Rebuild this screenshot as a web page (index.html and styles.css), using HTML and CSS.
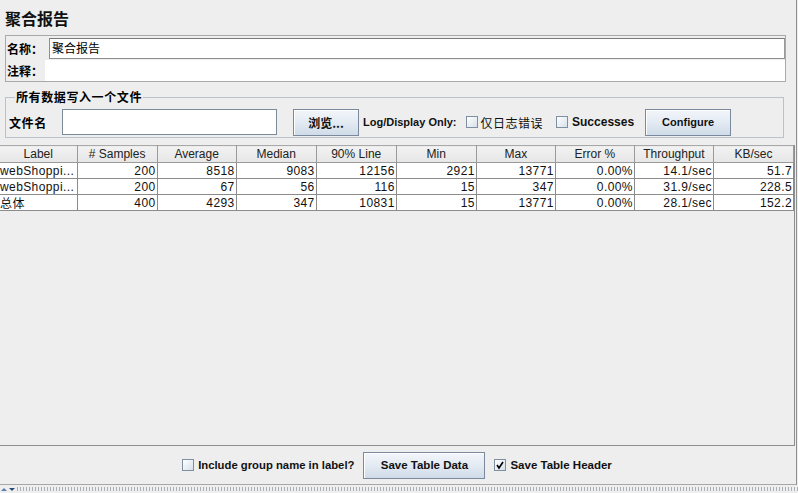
FILE: index.html
```html
<!DOCTYPE html>
<html lang="zh">
<head>
<meta charset="utf-8">
<title>聚合报告</title>
<link rel="stylesheet" href="styles.css">
</head>
<body>
<div class="app">
  <div class="main">
    <div class="title">聚合报告</div>
    <div class="namepanel">
      <div class="nrow">
        <span class="nlabel n1">名称：</span>
        <div class="nfield">聚合报告</div>
      </div>
      <div class="nrow">
        <span class="nlabel n2">注释：</span>
        <div class="cfield"></div>
      </div>
    </div>
    <fieldset class="filebox">
      <legend>所有数据写入一个文件</legend>
      <div class="filerow">
        <span class="flabel">文件名</span>
        <div class="ffield"></div>
        <button class="btn browse">浏览...</button>
        <span class="blabel logonly">Log/Display Only:</span>
        <span class="cb cb1"></span><span class="clabel">仅日志错误</span>
        <span class="cb cb2"></span><span class="blabel succ">Successes</span>
        <button class="btn configure">Configure</button>
      </div>
    </fieldset>
    <div class="tablepane">
      <table class="grid">
        <colgroup>
          <col class="c1"><col class="c2"><col class="c3"><col class="c4"><col class="c5">
          <col class="c6"><col class="c7"><col class="c8"><col class="c9"><col class="c10">
        </colgroup>
        <thead>
          <tr><th>Label</th><th># Samples</th><th>Average</th><th>Median</th><th>90% Line</th><th>Min</th><th>Max</th><th>Error %</th><th>Throughput</th><th>KB/sec</th></tr>
        </thead>
        <tbody>
          <tr><td class="lbl">webShoppi...</td><td>200</td><td>8518</td><td>9083</td><td>12156</td><td>2921</td><td>13771</td><td>0.00%</td><td>14.1/sec</td><td>51.7</td></tr>
          <tr><td class="lbl">webShoppi...</td><td>200</td><td>67</td><td>56</td><td>116</td><td>15</td><td>347</td><td>0.00%</td><td>31.9/sec</td><td>228.5</td></tr>
          <tr><td class="lbl cjk">总体</td><td>400</td><td>4293</td><td>347</td><td>10831</td><td>15</td><td>13771</td><td>0.00%</td><td>28.1/sec</td><td>152.2</td></tr>
        </tbody>
      </table>
    </div>
    <div class="bottombar">
      <span class="cb"></span><span class="blabel incl">Include group name in label?</span>
      <button class="btn savedata">Save Table Data</button>
      <span class="cb checked"><svg width="10" height="10" viewBox="0 0 10 10"><path d="M2 5 L4 8 L8 2" fill="none" stroke="#000" stroke-width="1.6"/></svg></span><span class="blabel">Save Table Header</span>
    </div>
  </div>
  <div class="splitter">
    <svg class="arrows" width="16" height="8" viewBox="0 0 16 8"><path d="M1 6 L4 3 L7 6 Z" fill="#5a7fb0"/><path d="M9 3 L15 3 L12 6 Z" fill="#2c4a78"/></svg>
    <div class="dots"></div>
  </div>
</div>
</body>
</html>
```

FILE: styles.css
```css
html, body {
  margin: 0;
  padding: 0;
}
body {
  width: 798px;
  height: 493px;
  overflow: hidden;
  background: #eeeeee;
  color: #000;
  font-family: "Liberation Sans", "Noto Sans CJK SC", sans-serif;
  font-size: 12px;
}
.app {
  display: flex;
  flex-direction: column;
  height: 493px;
}
.main {
  width: 797px;
  height: 485px;
  box-sizing: border-box;
  border-right: 1px solid #8e8e8e;
  border-bottom: 1px solid #a8a8a8;
  display: flex;
  flex-direction: column;
}
.title {
  height: 35px;
  box-sizing: border-box;
  padding: 9px 0 0 5px;
  font-family: "Noto Sans CJK SC", sans-serif;
  font-size: 16px;
  line-height: 18px;
  font-weight: 700;
  color: #111;
}
.namepanel {
  margin-left: 5px;
  width: 781px;
  height: 47px;
  box-sizing: border-box;
  border: 1px solid #a9a9a9;
  padding: 2px 0 0 1px;
  display: flex;
  flex-direction: column;
  gap: 1px;
}
.nrow {
  display: flex;
  align-items: center;
  height: 21px;
}
.nlabel {
  font-family: "Noto Sans CJK SC", sans-serif;
  font-weight: 700;
  font-size: 12px;
  line-height: 14px;
  box-sizing: border-box;
}
.n1 { width: 42px; }
.n2 { width: 38px; }
.nfield {
  width: 736px;
  height: 21px;
  box-sizing: border-box;
  background: #fff;
  border: 1px solid #8f8f8f;
  border-top-color: #7a7a7a;
  border-right-color: #9a9a9a;
  font-family: "Noto Sans CJK SC", sans-serif;
  font-size: 12px;
  line-height: 18px;
  padding-left: 2px;
}
.cfield {
  flex: 1;
  height: 21px;
  background: #fff;
}
.filebox {
  margin: 7px 0 0 5px;
  width: 779px;
  box-sizing: border-box;
  border: 1px solid #b8c3cd;
  padding: 0 0 1px 3px;
  min-width: 0;
}
.filebox legend {
  margin-left: 6px;
  padding: 0 1px;
  font-family: "Noto Sans CJK SC", sans-serif;
  font-weight: 700;
  font-size: 12px;
  line-height: 16px;
  letter-spacing: 0.6px;
}
.filerow {
  display: flex;
  align-items: center;
  height: 28px;
  margin-top: 3px;
}
.flabel {
  font-family: "Noto Sans CJK SC", sans-serif;
  font-weight: 700;
  font-size: 12px;
  letter-spacing: 0.6px;
  width: 53px;
}
.ffield {
  width: 215px;
  height: 26px;
  box-sizing: border-box;
  background: #fff;
  border: 1px solid #7d8a99;
  margin-bottom: 1px;
}
.btn {
  height: 27px;
  box-sizing: border-box;
  border: 1px solid #7a8a9c;
  border-radius: 0;
  background: linear-gradient(#f3f6fa, #e1e9f2 55%, #cfdbe8);
  box-shadow: inset 1px 1px 0 #ffffff;
  font-family: "Liberation Sans", "Noto Sans CJK SC", sans-serif;
  font-weight: 700;
  font-size: 11px;
  color: #111;
  padding: 0;
  margin: 0;
}
.browse {
  margin-left: 16px;
  width: 66px;
  font-family: "Noto Sans CJK SC", sans-serif;
  font-size: 12px;
}
.blabel {
  font-weight: 700;
  font-size: 11.5px;
  color: #111;
  white-space: nowrap;
}
.logonly {
  margin-left: 4px;
  font-size: 11px;
}
.succ { font-size: 12px; }
.clabel {
  font-family: "Noto Sans CJK SC", sans-serif;
  font-size: 12px;
  letter-spacing: 0.5px;
  margin-left: 3px;
  color: #111;
}
.cb {
  width: 12px;
  height: 12px;
  box-sizing: border-box;
  border: 1px solid #7e8fa2;
  background: linear-gradient(135deg, #ffffff, #d6e0ea);
  display: inline-flex;
  align-items: center;
  justify-content: center;
  flex: none;
}
.cb1 { margin-left: 9px; }
.cb2 { margin-left: 13px; margin-right: 4px; }
.configure {
  margin-left: 11px;
  width: 86px;
}
.tablepane {
  margin-top: 7px;
  width: 795px;
  height: 301px;
  box-sizing: border-box;
  border-right: 1px solid #8e8e8e;
  border-bottom: 1px solid #8e8e8e;
  overflow: hidden;
}
.grid {
  table-layout: fixed;
  border-collapse: collapse;
  width: 794px;
}
.c1 { width: 77px; }
.c2 { width: 80px; }
.c3 { width: 79px; }
.c4 { width: 80px; }
.c5 { width: 80px; }
.c6 { width: 80px; }
.c7 { width: 79px; }
.c8 { width: 79px; }
.c9 { width: 79px; }
.c10 { width: 80px; }
.grid th {
  height: 16px;
  padding: 0;
  font-weight: 400;
  font-size: 12px;
  color: #222;
  text-align: center;
  background: linear-gradient(#f2f2f2, #e6e6e6);
  border-top: 1px solid #a8a8a8;
  border-bottom: 1px solid #9a9a9a;
  border-right: 1px solid #9a9a9a;
  border-left: 1px solid #9a9a9a;
  line-height: 15px;
}
.grid th:first-child { border-left: none; }
.grid td {
  height: 15px;
  padding: 0 1px 0 0;
  background: #fff;
  border: 1px solid #8c8c8c;
  text-align: right;
  font-size: 12px;
  line-height: 14px;
  letter-spacing: 0.4px;
  color: #111;
  white-space: nowrap;
  overflow: hidden;
}
.grid td:first-child { border-left: none; }
.grid td.lbl {
  text-align: left;
  padding: 0;
}
.grid td.cjk {
  font-family: "Noto Sans CJK SC", sans-serif;
}
.bottombar {
  flex: 1;
  display: flex;
  align-items: center;
  justify-content: center;
  padding-right: 2px;
}
.incl {
  margin-left: 4px;
  font-size: 11.3px;
}
.savedata {
  margin-left: 9px;
  width: 122px;
  font-size: 11.5px;
}
.checked { margin-left: 9px; margin-right: 4px; }
.splitter {
  flex: 1;
  display: flex;
  align-items: center;
}
.arrows { flex: none; }
.dots {
  flex: 1;
  height: 4px;
  background-image: radial-gradient(circle, #a9b0b8 0.7px, transparent 0.9px);
  background-size: 3px 2px;
}
```
